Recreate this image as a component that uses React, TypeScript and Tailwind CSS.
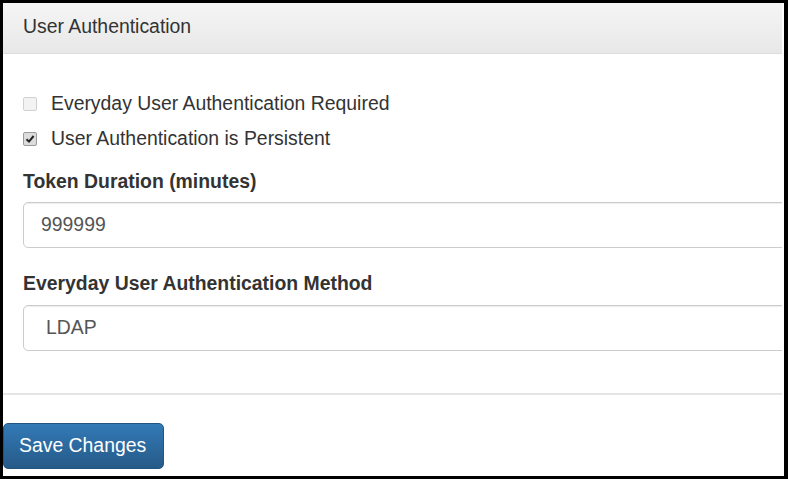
import React from 'react';

const font = { fontFamily: '"Liberation Sans", Arial, sans-serif' };

const Check: React.FC<{ checked?: boolean }> = ({ checked }) => (
  <span
    className={`flex h-[14px] w-[14px] shrink-0 items-center justify-center rounded-[2px] border ${
      checked ? 'border-[#9a9a9a] bg-[#dcdcdc]' : 'border-[#d0d0d0] bg-[#f3f3f3]'
    }`}
  >
    {checked && (
      <svg width="10" height="10" viewBox="0 0 10 10">
        <path d="M1.5 5.2 L4 7.6 L8.6 2" fill="none" stroke="#222" strokeWidth="2" />
      </svg>
    )}
  </span>
);

const App: React.FC = () => {
  return (
    <div className="h-[479px] w-[788px] bg-black pb-[3px] pl-[3px] pr-[4px] pt-[3px]" style={font}>
      <div className="h-full w-full overflow-hidden bg-white">
        <div className="w-[779px] overflow-hidden">
          {/* Panel heading */}
          <div className="flex h-[51px] items-center border-b border-[#dcdcdc] bg-gradient-to-b from-[#f5f5f5] to-[#e8e8e8] pb-[2px] pl-[20px] text-[19.4px] text-[#333]">
            User Authentication
          </div>

          <div className="pl-[20px] pt-[37px] text-[19.4px] text-[#333]">
            <label className="flex h-[25px] items-center gap-[14px]">
              <Check />
              <span>Everyday User Authentication Required</span>
            </label>
            <label className="mt-[10px] flex h-[25px] items-center gap-[14px]">
              <Check checked />
              <span>User Authentication is Persistent</span>
            </label>

            <div className="mt-[18px] h-[25px] font-bold leading-[25px]">Token Duration (minutes)</div>
            <div className="mt-[8px] flex h-[46px] w-[820px] items-center rounded-[5px] border border-[#cccccc] pl-[17px] text-[#555] shadow-[inset_0_1px_1px_rgba(0,0,0,0.075)]">
              999999
            </div>

            <div className="mt-[23px] h-[25px] font-bold leading-[25px]">Everyday User Authentication Method</div>
            <div className="mt-[9px] flex h-[46px] w-[820px] items-center rounded-[5px] border border-[#cccccc] pl-[22px] text-[#555] shadow-[inset_0_1px_1px_rgba(0,0,0,0.075)]">
              LDAP
            </div>
          </div>

          <div className="mt-[42px] h-[2px] bg-[#e5e5e5]" />

          <button className="mt-[28px] flex h-[46px] w-[161px] items-center rounded-[5px] border border-[#245580] bg-gradient-to-b from-[#337ab7] to-[#265a88] pl-[15px] text-[19.4px] text-white">
            Save Changes
          </button>
        </div>
      </div>
    </div>
  );
};

export default App;
